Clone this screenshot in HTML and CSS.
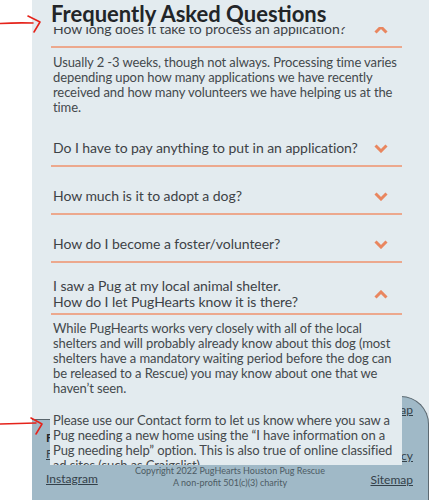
FILE: index.html
```html
<!DOCTYPE html>
<html lang="en">
<head>
<meta charset="utf-8">
<title>FAQ - PugHearts</title>
<link rel="stylesheet" href="styles.css">
</head>
<body>
<div class="page">
  <header class="faq-head"><h1>Frequently Asked Questions</h1></header>
  <section class="faq">
    <div class="item">
      <div class="q"><span>How long does it take to process an application?</span><svg class="chev" viewBox="0 0 14 9"><polyline points="1.5,7.5 7,2 12.5,7.5"/></svg></div>
      <div class="a"><p>Usually 2 -3 weeks, though not always. Processing time varies depending upon how many applications we have recently received and how many volunteers we have helping us at the time.</p></div>
    </div>
    <div class="item">
      <div class="q"><span>Do I have to pay anything to put in an application?</span><svg class="chev" viewBox="0 0 14 9"><polyline points="1.5,1.5 7,7 12.5,1.5"/></svg></div>
    </div>
    <div class="item">
      <div class="q"><span>How much is it to adopt a dog?</span><svg class="chev" viewBox="0 0 14 9"><polyline points="1.5,1.5 7,7 12.5,1.5"/></svg></div>
    </div>
    <div class="item">
      <div class="q"><span>How do I become a foster/volunteer?</span><svg class="chev" viewBox="0 0 14 9"><polyline points="1.5,1.5 7,7 12.5,1.5"/></svg></div>
    </div>
    <div class="item">
      <div class="q q--multi"><span>I saw a Pug at my local animal shelter.<br>How do I let PugHearts know it is there?</span><svg class="chev" viewBox="0 0 14 9"><polyline points="1.5,7.5 7,2 12.5,7.5"/></svg></div>
      <div class="a a--overflow">
        <p>While PugHearts works very closely with all of the local shelters and will probably already know about this dog (most shelters have a mandatory waiting period before the dog can be released to a Rescue) you may know about one that we haven’t seen.</p>
        <p>Please use our Contact form to let us know where you saw a Pug needing a new home using the “I have information on a Pug needing help” option. This is also true of online classified ad sites (such as Craigslist).</p>
      </div>
    </div>
  </section>
  <footer class="footer">
    <div class="f-col f-left">
      <h4 class="f-title">Follow Us</h4>
      <a class="f-link" href="#">Facebook</a>
      <a class="f-link f-insta" href="#">Instagram</a>
    </div>
    <div class="f-center">
      <div>Copyright 2022 PugHearts Houston Pug Rescue</div>
      <div>A non-profit 501(c)(3) charity</div>
    </div>
    <div class="f-col f-right">
      <a class="f-link" href="#">Site Map</a>
      <a class="f-link f-privacy" href="#">Privacy Policy</a>
      <a class="f-link f-sitemap" href="#">Sitemap</a>
    </div>
  </footer>
</div>
<svg class="arrows" viewBox="0 0 60 500" width="60" height="500">
  <path d="M0 23.5 Q16 22.5 33 23"/>
  <path d="M28 16 L40 22 L34 32"/>
  <path d="M0 424 Q16 423.5 36 423"/>
  <path d="M31 418 L42 424 L36 434"/>
</svg>
</body>
</html>
```
FILE: styles.css
```css
* { box-sizing: border-box; }

body {
  margin: 0;
  background: #ffffff;
  font-family: Lato, "Open Sans", sans-serif;
  color: #404548;
  position: relative;
}

.page {
  margin-left: 32px;
  width: 397px;
  height: 500px;
  background: #e3ebef;
  position: relative;
  overflow: hidden;
}

.faq-head {
  position: absolute;
  top: 0;
  left: 0;
  right: 0;
  height: 27px;
  padding-left: 19px;
  background: #e3ebef;
  z-index: 3;
}

.faq-head h1 {
  margin: 0;
  padding-top: 1px;
  font-size: 22px;
  line-height: 26px;
  font-weight: 700;
  color: #222528;
}

.faq {
  position: relative;
  z-index: 2;
  width: 370px;
  height: 420px;
  padding-left: 19px;
  background: #e3ebef;
  border-bottom: 1px solid #59646b;
}

.q {
  display: flex;
  align-items: center;
  justify-content: space-between;
  padding: 21px 14px 9px 2px;
  font-size: 14px;
  letter-spacing: -0.05px;
  line-height: 16px;
  color: #3d4246;
  border-bottom: 2px solid #eca88d;
}

.q--multi {
  padding: 15px 14px 3px 2px;
}

.chev {
  width: 14px;
  height: 9px;
  flex: none;
}

.chev polyline {
  fill: none;
  stroke: #e9865f;
  stroke-width: 3;
}

.a {
  padding: 7px 2px 4px;
  font-size: 13px;
  letter-spacing: -0.1px;
  line-height: 15px;
  color: #44494c;
}

.a p {
  margin: 0;
}

.a p + p {
  margin-top: 17px;
}

.a--overflow {
  margin-left: -1px;
  padding: 6px 2px 0 3px;
  height: 150px;
  overflow: hidden;
  background: #e3ebef;
}

.footer {
  position: relative;
  z-index: 1;
  margin-top: -24px;
  height: 104px;
  background: #a0b9c7;
  border-top: 1px solid #5d6a72;
  border-right: 1px solid #5d6a72;
  border-top-right-radius: 28px;
  display: grid;
  grid-template-columns: 1fr auto 1fr;
  font-size: 12px;
}

.f-col {
  display: flex;
  flex-direction: column;
}

.f-left {
  padding: 33px 0 0 14px;
  align-items: flex-start;
}

.f-right {
  padding: 5px 15px 0 0;
  align-items: flex-end;
}

.f-title {
  margin: 0;
  font-size: 12px;
  line-height: 16px;
  font-weight: 700;
  color: #222528;
  white-space: nowrap;
}

.f-link {
  display: block;
  line-height: 16px;
  color: #34414a;
  text-decoration: underline;
  white-space: nowrap;
}

.f-insta { margin-top: 9px; }
.f-privacy { margin-top: 30px; }
.f-sitemap { margin-top: 8px; }

.f-center {
  align-self: end;
  padding-bottom: 11px;
  font-size: 9px;
  line-height: 12px;
  text-align: center;
  color: #4d5b64;
  white-space: nowrap;
}

.arrows {
  position: absolute;
  top: 0;
  left: 0;
  z-index: 10;
  pointer-events: none;
}

.arrows path {
  fill: none;
  stroke: #e5231b;
  stroke-width: 1.6;
  stroke-linecap: round;
  stroke-linejoin: round;
}
```
